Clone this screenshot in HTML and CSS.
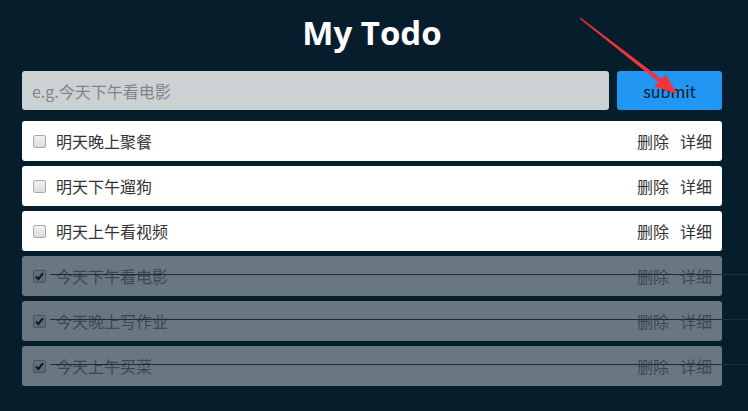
FILE: index.html
```html
<!DOCTYPE html>
<html>
<head>
<meta charset="utf-8">
<link rel="stylesheet" href="styles.css">
</head>
<body>
<div class="app">
  <h1 class="title">My Todo</h1>
  <form class="add-form">
    <input class="add-input" type="text" placeholder="e.g.今天下午看电影">
    <button class="add-btn" type="button">submit</button>
  </form>
  <ul class="list">
    <li class="item"><input type="checkbox" class="check"><span class="text">明天晚上聚餐</span><span class="actions"><a>删除</a><a>详细</a></span></li>
    <li class="item"><input type="checkbox" class="check"><span class="text">明天下午遛狗</span><span class="actions"><a>删除</a><a>详细</a></span></li>
    <li class="item"><input type="checkbox" class="check"><span class="text">明天上午看视频</span><span class="actions"><a>删除</a><a>详细</a></span></li>
    <li class="item done"><input type="checkbox" class="check" checked><span class="text">今天下午看电影</span><span class="actions"><a>删除</a><a>详细</a></span></li>
    <li class="item done"><input type="checkbox" class="check" checked><span class="text">今天晚上写作业</span><span class="actions"><a>删除</a><a>详细</a></span></li>
    <li class="item done"><input type="checkbox" class="check" checked><span class="text">今天上午买菜</span><span class="actions"><a>删除</a><a>详细</a></span></li>
  </ul>
</div>
<svg class="arrow" width="748" height="411" viewBox="0 0 748 411">
  <polygon points="579.5,18.5 581,18 661.5,79 665.5,74.5 677.5,94 654,86.5 658.5,82" fill="#f0343c"/>
</svg>
</body>
</html>
```

FILE: styles.css
```css
* { box-sizing: border-box; }
html, body { margin: 0; padding: 0; }
body {
  background: #061d2c;
  font-family: "Noto Sans CJK SC", "Noto Sans", sans-serif;
  font-size: 16px;
  width: 748px;
  height: 411px;
  overflow: hidden;
}
.app {
  width: 700px;
  margin-left: 22px;
  padding-top: 10px;
}
.title {
  margin: 0;
  height: 45px;
  line-height: 45px;
  text-align: center;
  color: #ffffff;
  font-family: "Open Sans", "Noto Sans", sans-serif;
  font-weight: 700;
  font-size: 33px;
}
.add-form {
  display: flex;
  gap: 8px;
  margin-top: 16px;
}
.add-input {
  flex: 1;
  height: 39px;
  border: none;
  border-radius: 3px;
  background: #ccd1d4;
  padding: 0 10px;
  font-family: "Noto Sans CJK SC", "Noto Sans", sans-serif;
  font-size: 16px;
  outline: none;
}
.add-input::placeholder { color: #7f8588; }
.add-btn {
  width: 105px;
  height: 39px;
  border: none;
  border-radius: 3px;
  background: #2196f3;
  color: #0b1a24;
  font-family: "Noto Sans CJK SC", "Noto Sans", sans-serif;
  font-size: 16px;
  padding: 0;
}
.list {
  list-style: none;
  margin: 11px 0 0;
  padding: 0;
  display: flex;
  flex-direction: column;
  gap: 5px;
}
.item {
  position: relative;
  height: 40px;
  background: #ffffff;
  border-radius: 3px;
  display: flex;
  align-items: center;
  padding: 0 10px 0 11px;
  color: #333333;
}
.check {
  -webkit-appearance: none;
  appearance: none;
  width: 13px;
  height: 13px;
  margin: 0 10px 0 0;
  border: 1px solid #a9a9a9;
  border-radius: 2px;
  background: linear-gradient(#f2f2f2, #dcdcdc);
}
.check:checked {
  background: url("data:image/svg+xml,%3Csvg xmlns='http://www.w3.org/2000/svg' width='11' height='11' viewBox='0 0 11 11'%3E%3Cpath d='M2 5.6 L4.3 8 L9 2.3' fill='none' stroke='%23222' stroke-width='2.2'/%3E%3C/svg%3E") center / 11px 11px no-repeat, linear-gradient(#f2f2f2, #dcdcdc);
}
.text { flex: 1; }
.actions { display: flex; gap: 11px; }
.actions a { cursor: pointer; }
.done {
  opacity: 0.4;
  color: #8a8a8a;
}
.done::after {
  content: "";
  position: absolute;
  left: 28px;
  top: 18px;
  width: 100%;
  height: 1px;
  background: #444444;
}
.arrow {
  position: absolute;
  left: 0;
  top: 0;
  pointer-events: none;
}
```
